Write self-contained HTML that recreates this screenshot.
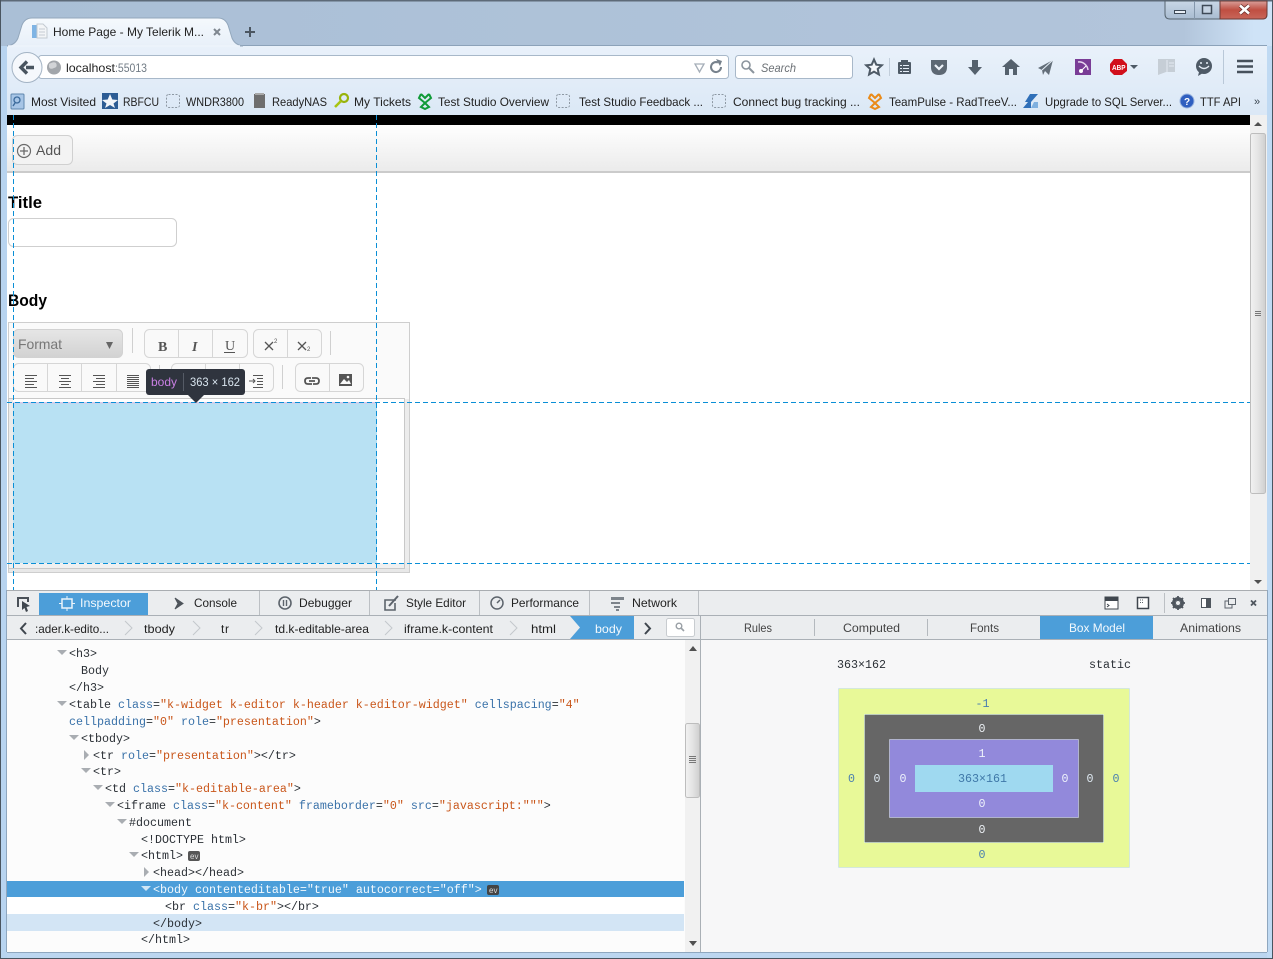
<!DOCTYPE html>
<html><head><meta charset="utf-8"><title>Home Page - My Telerik M...</title>
<style>
html,body{margin:0;padding:0;width:1273px;height:959px;overflow:hidden;background:#bcd6f0}
svg{display:block}
text{font-family:"Liberation Sans",sans-serif;font-size:12px;fill:#222}
.m text,text.m,.m{font-family:"Liberation Mono",monospace;font-size:11.67px;fill:#2b3036}
.n{fill:#3a72a9}.v{fill:#c9561a}
.w{fill:#fff}
.b{fill:#4a7fb0}
</style></head><body>
<svg width="1273" height="959" viewBox="0 0 1273 959" xmlns="http://www.w3.org/2000/svg" xml:space="preserve">
<defs>
<linearGradient id="title" x1="0" x2="1" y1="0" y2="0"><stop offset="0" stop-color="#aabfd6"/><stop offset=".93" stop-color="#b2c5db"/><stop offset=".985" stop-color="#cfe3f7"/></linearGradient>
<linearGradient id="nav" x1="0" x2="0" y1="0" y2="1"><stop offset="0" stop-color="#e9f1fa"/><stop offset="1" stop-color="#dbe8f6"/></linearGradient>
<linearGradient id="tab" x1="0" x2="0" y1="0" y2="1"><stop offset="0" stop-color="#f5f9fd"/><stop offset="1" stop-color="#e8f0f9"/></linearGradient>
<linearGradient id="tb" x1="0" x2="0" y1="0" y2="1"><stop offset="0" stop-color="#fff"/><stop offset="1" stop-color="#ebebeb"/></linearGradient>
<linearGradient id="fmt" x1="0" x2="0" y1="0" y2="1"><stop offset="0" stop-color="#e6e6e6"/><stop offset="1" stop-color="#d2d2d2"/></linearGradient>
<linearGradient id="thumb" x1="0" x2="1" y1="0" y2="0"><stop offset="0" stop-color="#f2f2f2"/><stop offset=".5" stop-color="#e4e4e4"/><stop offset="1" stop-color="#cfcfcf"/></linearGradient>
<linearGradient id="close" x1="0" x2="0" y1="0" y2="1"><stop offset="0" stop-color="#d9a09a"/><stop offset=".5" stop-color="#bf4f42"/><stop offset="1" stop-color="#c8665a"/></linearGradient>
<linearGradient id="ctl" x1="0" x2="0" y1="0" y2="1"><stop offset="0" stop-color="#c8d7e6"/><stop offset="1" stop-color="#a9bcd1"/></linearGradient>
</defs>

<!-- window frame -->
<rect width="1273" height="959" fill="#bcd6f0"/>
<rect x="0" y="0" width="1273" height="46" fill="url(#title)"/>
<rect x="0" y="0" width="1273" height="1.5" fill="#5d6a78"/>
<rect x="0" y="0" width="1" height="959" fill="#4a5560"/>
<rect x="1272" y="0" width="1" height="959" fill="#4a5560"/>
<rect x="0" y="958" width="1273" height="1" fill="#4a5560"/>
<rect x="1" y="46" width="6" height="912" fill="#b8d4f0"/>
<rect x="1267" y="46" width="5" height="912" fill="#c0daf3"/>

<!-- window controls -->
<path d="M1165 1V14Q1165 19 1170 19H1263Q1267 19 1267 14V1Z" fill="url(#ctl)" stroke="#56646f"/>
<path d="M1220 1H1267V14Q1267 19 1263 19H1220Z" fill="url(#close)" stroke="#6b3a36"/>
<line x1="1194.500" y1="1" x2="1194.500" y2="19" stroke="#8497ab"/>
<rect x="1174.500" y="10.500" width="11" height="3" fill="#e8eef5" stroke="#3e4a57"/>
<rect x="1202.500" y="5.500" width="9" height="8" fill="#c5d3e2" stroke="#3e4a57" stroke-width="1.500"/>
<path d="M1240 5.500L1249 13.500M1249 5.500L1240 13.500" stroke="#5f2a26" stroke-width="4"/>
<path d="M1240 5.500L1249 13.500M1249 5.500L1240 13.500" stroke="#fff" stroke-width="2.600"/>

<!-- nav + bookmarks -->
<rect x="7" y="46" width="1260" height="69" fill="url(#nav)"/>
<line x1="7" y1="45.500" x2="1267" y2="45.500" stroke="#8ca2b9"/>
<path d="M7 46Q15 45 18 38L22 25Q25 18 32 18H218Q225 18 228 25L232 38Q235 45 243 46Z" fill="url(#tab)" stroke="#93a7bc"/>
<line x1="8" y1="46" x2="240" y2="46" stroke="#eef4fb" stroke-width="1.500"/>
<path d="M32 25H37V38H32Z" fill="#7fb4e4"/><path d="M37 24H43L47 28V38H37Z" fill="#f3f5f7" stroke="#c3cad1"/>
<path d="M39 29H45M39 32H45M39 35H45" stroke="#c6ccd3"/>
<text x="53" y="36" textLength="151" lengthAdjust="spacingAndGlyphs">Home Page - My Telerik M...</text>
<path d="M214 29L220 35M220 29L214 35" stroke="#7f8790" stroke-width="2"/>
<path d="M250 27V37M245 32H255" stroke="#4b5661" stroke-width="2"/>

<rect x="38.500" y="55.500" width="690" height="23" rx="3" fill="#fff" stroke="#a8b8c9"/>
<circle cx="27" cy="67.500" r="15" fill="#f5f8fc" stroke="#a3b3c4"/>
<path d="M34 67.500H26M27 61.500L21 67.500L27 73.500" fill="none" stroke="#4a5560" stroke-width="3.400"/>
<circle cx="54" cy="67.500" r="7" fill="#a2a6ab"/><path d="M49 64Q54 61 56 63Q58 67 54 68Q50 70 49 67Z" fill="#d2d4d7"/>
<text x="66" y="72" textLength="49" lengthAdjust="spacingAndGlyphs">localhost</text>
<text x="115" y="72" textLength="32" lengthAdjust="spacingAndGlyphs" style="fill:#717b85">:55013</text>
<path d="M695 64H704L699.500 72Z" fill="none" stroke="#a5aeb8" stroke-width="1.300"/>
<path d="M721 67A5 5 0 1 1 718 62.500" fill="none" stroke="#76818c" stroke-width="2"/><path d="M716 59L722 61L720 66Z" fill="#76818c"/>
<rect x="735.500" y="55.500" width="117" height="23" rx="3" fill="#fff" stroke="#a8b8c9"/>
<circle cx="746" cy="65" r="4" fill="none" stroke="#8b949d" stroke-width="1.600"/><line x1="749" y1="68" x2="754" y2="73" stroke="#8b949d" stroke-width="2"/>
<text x="761" y="72" textLength="35" lengthAdjust="spacingAndGlyphs" style="font-style:italic;fill:#6c7176">Search</text>

<!-- toolbar icons -->
<path d="M874 59.500L876.300 64.700L881.800 65.300L877.700 69L878.900 74.500L874 71.600L869.100 74.500L870.300 69L866.200 65.300L871.700 64.700Z" fill="#f4f7fb" stroke="#4e5a66" stroke-width="2"/>
<line x1="889.500" y1="58" x2="889.500" y2="76" stroke="#c2cedb"/>
<rect x="898" y="62" width="13" height="12" rx="1" fill="#4e5a66"/><rect x="901" y="60" width="7" height="3" fill="#4e5a66"/>
<path d="M900 65.500H902M903 65.500H909M900 68.500H902M903 68.500H909M900 71.500H902M903 71.500H909" stroke="#e6eef7"/>
<path d="M931 60H947V67Q947 75 939 75Q931 75 931 67Z" fill="#5d6873"/><path d="M935 65L939 69L943 65" fill="none" stroke="#eef3f9" stroke-width="2.200"/>
<path d="M972 60H978V67H982L975 75L968 67H972Z" fill="#55616d"/>
<path d="M1011 59L1020 67H1017V75H1013V69H1009V75H1005V67H1002Z" fill="#55616d"/>
<path d="M1053 60L1049 75L1045 71L1043 75L1042 70L1038 68Z" fill="#636e79"/><path d="M1053 60L1042 70" stroke="#e6eef7"/>
<rect x="1075" y="59" width="16" height="16" fill="#7a3d96"/>
<path d="M1078 62A9 9 0 0 1 1088 70" fill="none" stroke="#e8d7ef" stroke-width="1.500"/><circle cx="1081" cy="71" r="2" fill="#fff"/><path d="M1082 70L1086 66" stroke="#fff"/>
<path d="M1114 59H1122L1127 64V71L1122 75H1114L1110 71V64Z" fill="#d10f1b"/>
<text x="1112" y="70" textLength="13.500" lengthAdjust="spacingAndGlyphs" style="font-size:7.500px;font-weight:bold;fill:#fff">ABP</text>
<path d="M1130 65H1138L1134 69Z" fill="#4e5a66"/>
<path d="M1158 59H1175V72H1166L1158 75Z" fill="#c6ced6"/><path d="M1167 60V72M1169 63H1174M1169 66H1174" stroke="#e4ebf2"/>
<circle cx="1204" cy="66" r="8" fill="#4e5a66"/><path d="M1199 72L1198 76L1203 73Z" fill="#4e5a66"/><path d="M1199 66Q1204 71 1209 66" fill="none" stroke="#e6eef7" stroke-width="1.300"/><circle cx="1201" cy="63" r="1" fill="#e6eef7"/><circle cx="1207" cy="63" r="1" fill="#e6eef7"/>
<line x1="1223.500" y1="50" x2="1223.500" y2="84" stroke="#b9c8d8"/>
<path d="M1237 61H1253M1237 66.500H1253M1237 72H1253" stroke="#46515c" stroke-width="2.600"/>

<!-- bookmarks -->
<rect x="11" y="94" width="13" height="15" rx="1" fill="#a7c5e6" stroke="#5f86ad"/><circle cx="17" cy="100" r="3" fill="none" stroke="#3b6a9b" stroke-width="1.300"/><line x1="15" y1="103" x2="13" y2="106" stroke="#3b6a9b" stroke-width="1.400"/>
<text x="31" y="106" textLength="65" lengthAdjust="spacingAndGlyphs">Most Visited</text>
<rect x="102" y="93" width="16" height="16" fill="#2c5c94"/><path d="M110 94L112.300 99.500L118 100L113.500 103.500L115 108L110 105L105 108L106.500 103.500L102 100L107.700 99.500Z" fill="#f2f5f9"/>
<text x="123" y="106" textLength="36" lengthAdjust="spacingAndGlyphs">RBFCU</text>
<rect x="166.500" y="94.500" width="13" height="13" rx="2" fill="none" stroke="#8d98a3" stroke-dasharray="2 1.500"/>
<text x="186" y="106" textLength="58" lengthAdjust="spacingAndGlyphs">WNDR3800</text>
<rect x="254" y="94" width="11" height="14" fill="#6e6e6e"/><rect x="255" y="93" width="9" height="2" fill="#a9a9a9"/>
<text x="272" y="106" textLength="55" lengthAdjust="spacingAndGlyphs">ReadyNAS</text>
<circle cx="344" cy="98" r="4" fill="none" stroke="#98b30b" stroke-width="2.200"/><path d="M341 101L335 107" stroke="#a8c412" stroke-width="2.600"/>
<text x="354" y="106" textLength="57" lengthAdjust="spacingAndGlyphs">My Tickets</text>
<path d="M421 94L425 98L429 94M421 94L419 98L425 103L431 98L429 94M425 103L421 107L425 109L429 107Z" fill="none" stroke="#109a37" stroke-width="2"/>
<text x="438" y="106" textLength="111" lengthAdjust="spacingAndGlyphs">Test Studio Overview</text>
<rect x="556.500" y="94.500" width="13" height="13" rx="2" fill="none" stroke="#8d98a3" stroke-dasharray="2 1.500"/>
<text x="579" y="106" textLength="124" lengthAdjust="spacingAndGlyphs">Test Studio Feedback ...</text>
<rect x="712.500" y="94.500" width="13" height="13" rx="2" fill="none" stroke="#8d98a3" stroke-dasharray="2 1.500"/>
<text x="733" y="106" textLength="127" lengthAdjust="spacingAndGlyphs">Connect bug tracking ...</text>
<path d="M871 94L875 98L879 94M871 94L869 98L875 103L881 98L879 94M875 103L871 107L875 109L879 107Z" fill="none" stroke="#ea8a18" stroke-width="2"/>
<text x="889" y="106" textLength="128" lengthAdjust="spacingAndGlyphs">TeamPulse - RadTreeV...</text>
<path d="M1030 94H1038L1031 102H1025Z" fill="#2f6fb8"/><path d="M1023 108L1028 102H1031V108Z" fill="#2f6fb8"/><path d="M1034 102H1038V108H1031Z" fill="#7fb0df"/>
<text x="1045" y="106" textLength="127" lengthAdjust="spacingAndGlyphs">Upgrade to SQL Server...</text>
<circle cx="1187" cy="101" r="7" fill="#2f5fc0" stroke="#9bb5df"/><text x="1184" y="105" style="font-size:10px;font-weight:bold;fill:#fff">?</text>
<text x="1200" y="106" textLength="41" lengthAdjust="spacingAndGlyphs">TTF API</text>
<text x="1254" y="105" style="font-size:11px;fill:#3b4650">»</text>

<!-- page -->
<rect x="7" y="115" width="1260" height="475" fill="#fff"/>
<rect x="7" y="115" width="1243" height="10" fill="#000"/>
<rect x="1250" y="115" width="17" height="475" fill="#f0f0f0"/>
<rect x="1250.500" y="133.500" width="15" height="360" rx="2" fill="url(#thumb)" stroke="#bdbdbd"/>
<path d="M1255 311.500H1261M1255 313.500H1261M1255 315.500H1261" stroke="#777"/>
<path d="M1254 126L1258 122L1262 126Z" fill="#505050"/><path d="M1254 580L1258 584L1262 580Z" fill="#505050"/>

<rect x="7" y="125" width="1243" height="46" fill="url(#tb)"/>
<rect x="7" y="171" width="1243" height="2" fill="#cbcbcb"/>
<rect x="12.500" y="135.500" width="60" height="29" rx="5" fill="#f3f3f3" stroke="#d0d0d0"/>
<circle cx="24" cy="151" r="6.500" fill="none" stroke="#6a6a6a" stroke-width="1.200"/><path d="M24 147V155M20 151H28" stroke="#6a6a6a" stroke-width="1.300"/>
<text x="36" y="155" textLength="25" style="font-size:14px;fill:#555">Add</text>

<text x="8" y="208" textLength="34" lengthAdjust="spacingAndGlyphs" style="font-size:16.500px;font-weight:bold;fill:#000">Title</text>
<rect x="8.500" y="218.500" width="168" height="28" rx="5" fill="#fff" stroke="#cfcfcf"/>
<text x="8" y="306" textLength="39" lengthAdjust="spacingAndGlyphs" style="font-size:16.500px;font-weight:bold;fill:#000">Body</text>

<!-- editor -->
<rect x="8.500" y="322.500" width="401" height="250" fill="#fafafa" stroke="#cecece"/>
<rect x="405" y="399" width="4" height="173" fill="#ececec"/>
<rect x="9" y="568" width="400" height="4" fill="#e8e8e8"/>
<rect x="13.500" y="329.500" width="109" height="28" rx="5" fill="url(#fmt)" stroke="#d2d2d2"/>
<text x="18" y="349" textLength="44" style="font-size:14px;fill:#777">Format</text>
<path d="M106 342H113L109.500 349Z" fill="#666"/>
<line x1="132.500" y1="328" x2="132.500" y2="353" stroke="#d0d0d0"/>
<rect x="144.500" y="329.500" width="103" height="28" rx="5" fill="#f9f9f9" stroke="#d6d6d6"/>
<path d="M178.500 330V357M212.500 330V357" stroke="#d6d6d6"/>
<text x="158" y="351" style="font-family:'Liberation Serif',serif;font-size:14px;font-weight:bold;fill:#555">B</text>
<text x="192" y="351" style="font-family:'Liberation Serif',serif;font-size:14px;font-style:italic;font-weight:bold;fill:#555">I</text>
<text x="225" y="350" style="font-family:'Liberation Serif',serif;font-size:14px;fill:#555">U</text><line x1="224" y1="352.500" x2="235" y2="352.500" stroke="#555"/>
<rect x="253.500" y="329.500" width="68" height="28" rx="5" fill="#f9f9f9" stroke="#d6d6d6"/>
<line x1="287.500" y1="330" x2="287.500" y2="357" stroke="#d6d6d6"/>
<path d="M265 342L273 350M273 342L265 350M298 342L306 350M306 342L298 350" stroke="#555" stroke-width="1.300"/>
<text x="274" y="343" style="font-size:6px;fill:#555">2</text><text x="307" y="351" style="font-size:6px;fill:#555">2</text>
<line x1="330.500" y1="331" x2="330.500" y2="355" stroke="#d0d0d0"/>
<rect x="13.500" y="363.500" width="137" height="28" rx="5" fill="#f9f9f9" stroke="#d6d6d6"/>
<path d="M47.500 364V391M81.500 364V391M116.500 364V391" stroke="#d6d6d6"/>
<path d="M25 375.500H37M25 378.500H34M25 381.500H37M25 384.500H34M25 387.500H37" stroke="#555"/>
<path d="M59 375.500H71M61 378.500H69M59 381.500H71M61 384.500H69M59 387.500H71" stroke="#555"/>
<path d="M93 375.500H105M96 378.500H105M93 381.500H105M96 384.500H105M93 387.500H105" stroke="#555"/>
<path d="M127 375.500H139M127 377.500H139M127 379.500H139M127 381.500H139M127 383.500H139M127 385.500H139M127 387.500H139" stroke="#555"/>
<line x1="159.500" y1="365" x2="159.500" y2="389" stroke="#d0d0d0"/>
<rect x="171.500" y="363.500" width="102" height="28" rx="5" fill="#f9f9f9" stroke="#d6d6d6"/>
<path d="M205.500 364V391M239.500 364V391" stroke="#d6d6d6"/>
<path d="M253 375.500H263M257 378.500H263M257 381.500H263M257 384.500H263M253 387.500H263M249 381H255M253 379L255 381L253 383" stroke="#555" fill="none"/>
<line x1="282.500" y1="365" x2="282.500" y2="389" stroke="#d0d0d0"/>
<rect x="295.500" y="363.500" width="68" height="28" rx="5" fill="#f9f9f9" stroke="#d6d6d6"/>
<line x1="329.500" y1="364" x2="329.500" y2="391" stroke="#d6d6d6"/>
<path d="M311 378H308Q305 378 305 381Q305 384 308 384H312M313 384H316Q319 384 319 381Q319 378 316 378H312M309 381H315" fill="none" stroke="#555" stroke-width="1.800"/>
<rect x="339" y="374" width="13" height="12" fill="#555"/><path d="M340 384L344 379L347 382L349 380L351 384Z" fill="#f9f9f9"/><circle cx="348" cy="377" r="1.300" fill="#f9f9f9"/>

<rect x="8.500" y="398.500" width="396" height="170" fill="#fff" stroke="#c8c8c8"/>
<rect x="9" y="399" width="4" height="169" fill="#ebebeb"/>
<rect x="9" y="563" width="395" height="5" fill="#f0f0f0"/>
<rect x="13" y="403" width="364" height="160" fill="#b8e1f3"/>
<rect x="13" y="402" width="364" height="1.500" fill="#d8c8e8"/>

<!-- guides -->
<g stroke="#0a8fd6" stroke-dasharray="5 3" fill="none">
<line x1="13.500" y1="115" x2="13.500" y2="590"/>
<line x1="376.500" y1="115" x2="376.500" y2="590"/>
<line x1="7" y1="402.500" x2="1250" y2="402.500"/>
<line x1="7" y1="563.500" x2="1250" y2="563.500"/>
</g>

<!-- tooltip -->
<rect x="146" y="369" width="99" height="26" rx="3" fill="#2f343e"/>
<path d="M188 395H204L196 403Z" fill="#2f343e"/>
<line x1="183.500" y1="373" x2="183.500" y2="391" stroke="#555b66"/>
<text x="151" y="386" textLength="26" style="fill:#c97fe3;font-size:12px">body</text>
<text x="190" y="386" textLength="50" lengthAdjust="spacingAndGlyphs" style="fill:#d8e4ee;font-size:12px">363 × 162</text>

<!-- devtools toolbar -->
<rect x="7" y="590" width="1260" height="26" fill="#ebedef"/>
<line x1="7" y1="590.500" x2="1267" y2="590.500" stroke="#a9adb1"/>
<line x1="7" y1="615.500" x2="1267" y2="615.500" stroke="#aab0b6"/>
<path d="M18 607V598H28V602" fill="none" stroke="#4a5058" stroke-width="2"/><path d="M22 601L30 606L26.500 607L28 611L26 612L24.500 608L22 610Z" fill="#3f464e"/>
<rect x="39" y="593" width="109" height="22" fill="#4c9ed9"/>
<rect x="62" y="599" width="10" height="9" fill="none" stroke="#eaf4fb" stroke-width="1.500"/><path d="M67 596V599M67 608V611M59 603.500H62M72 603.500H75" stroke="#eaf4fb"/>
<text x="80" y="607" textLength="51" lengthAdjust="spacingAndGlyphs" style="fill:#f3f9fd">Inspector</text>
<path d="M175 598L183 603.500L175 609L178 603.500Z" fill="#4e545b" stroke="#4e545b"/>
<text x="194" y="607" textLength="43" lengthAdjust="spacingAndGlyphs">Console</text>
<circle cx="285" cy="603" r="6" fill="none" stroke="#5d646c" stroke-width="1.600"/><path d="M283.500 600V606M286.500 600V606" stroke="#5d646c" stroke-width="1.400"/>
<text x="299" y="607" textLength="53" lengthAdjust="spacingAndGlyphs">Debugger</text>
<path d="M396 600H385V610H395V603" fill="none" stroke="#5d646c" stroke-width="1.600"/><path d="M389 606L398 596" stroke="#5d646c" stroke-width="2"/>
<text x="406" y="607" textLength="60" lengthAdjust="spacingAndGlyphs">Style Editor</text>
<circle cx="497" cy="603" r="6" fill="none" stroke="#5d646c" stroke-width="1.500"/><path d="M497 603L500 600" stroke="#5d646c" stroke-width="1.500"/>
<text x="511" y="607" textLength="68" lengthAdjust="spacingAndGlyphs">Performance</text>
<path d="M611 597H624V600H611ZM611 602H620V604H611ZM614 606H620V608H614ZM616 609H619V611H616Z" fill="#7d848b"/>
<text x="632" y="607" textLength="45" lengthAdjust="spacingAndGlyphs">Network</text>
<path d="M259.500 591V615M369.500 591V615M479.500 591V615M589.500 591V615M698.500 591V615" stroke="#bcc0c4"/>
<rect x="1105" y="597" width="13" height="12" fill="#fff" stroke="#3f464e"/><rect x="1105" y="597" width="13" height="4" fill="#3f464e"/><path d="M1107 604L1109 605.500L1107 607" fill="none" stroke="#3f464e"/>
<rect x="1137.500" y="597.500" width="11" height="11" fill="#fff" stroke="#3f464e" stroke-width="1.500"/><path d="M1140 600H1143M1140 602.500H1143" stroke="#5d646c" stroke-dasharray="1 1"/>
<line x1="1164.500" y1="593" x2="1164.500" y2="613" stroke="#bcc0c4"/>
<circle cx="1178" cy="603" r="4.500" fill="none" stroke="#4f565e" stroke-width="3"/><path d="M1178 596V610M1171 603H1185M1173 598L1183 608M1183 598L1173 608" stroke="#4f565e" stroke-width="1.800"/><circle cx="1178" cy="603" r="2" fill="#ebedef"/>
<rect x="1201.500" y="598.500" width="9" height="9" fill="#fff" stroke="#4f565e"/><rect x="1206" y="598" width="5" height="10" fill="#4f565e"/>
<rect x="1228.500" y="598.500" width="7" height="6" fill="none" stroke="#5d646c"/><path d="M1228 601H1225V608H1232V605" fill="none" stroke="#5d646c"/>
<path d="M1251 600.500L1256 605.500M1256 600.500L1251 605.500" stroke="#4f565e" stroke-width="1.800"/>

<!-- breadcrumbs -->
<rect x="7" y="616" width="1260" height="23" fill="#ebedef"/>
<line x1="7" y1="639.500" x2="1267" y2="639.500" stroke="#aab0b6"/>
<path d="M26 623L21 628.500L26 634" fill="none" stroke="#3f464e" stroke-width="2"/>
<text x="35" y="633" textLength="74" lengthAdjust="spacingAndGlyphs">:ader.k-edito...</text>
<text x="144" y="633" textLength="31" lengthAdjust="spacingAndGlyphs">tbody</text>
<text x="221" y="633" textLength="8">tr</text>
<text x="275" y="633" textLength="94" lengthAdjust="spacingAndGlyphs">td.k-editable-area</text>
<text x="404" y="633" textLength="89" lengthAdjust="spacingAndGlyphs">iframe.k-content</text>
<text x="531" y="633" textLength="25" lengthAdjust="spacingAndGlyphs">html</text>
<path d="M125 621L132 628L125 635M193 621L200 628L193 635M255 621L262 628L255 635M385 621L392 628L385 635M510 621L517 628L510 635" fill="none" stroke="#c4c8cc"/>
<path d="M570 616H634V639H570L580 627.500Z" fill="#4c9ed9"/>
<text x="595" y="633" textLength="27" lengthAdjust="spacingAndGlyphs" style="fill:#f3f9fd">body</text>
<path d="M645 623L650 628.500L645 634" fill="none" stroke="#3f464e" stroke-width="2"/>
<rect x="666.500" y="618.500" width="28" height="18" rx="2" fill="#fff" stroke="#c8ccd0"/>
<circle cx="679" cy="626" r="2.800" fill="none" stroke="#9aa0a6" stroke-width="1.400"/><path d="M681 628L684 631" stroke="#9aa0a6" stroke-width="1.600"/>
<line x1="700.500" y1="616" x2="700.500" y2="952" stroke="#aab0b6"/>

<rect x="1040" y="616" width="113" height="23" fill="#4c9ed9"/>
<path d="M814.500 619V636M927.500 619V636" stroke="#b4b9be"/>
<text x="744" y="632" textLength="28" lengthAdjust="spacingAndGlyphs" style="fill:#444">Rules</text>
<text x="843" y="632" textLength="57" lengthAdjust="spacingAndGlyphs" style="fill:#444">Computed</text>
<text x="970" y="632" textLength="29" lengthAdjust="spacingAndGlyphs" style="fill:#444">Fonts</text>
<text x="1069" y="632" textLength="56" lengthAdjust="spacingAndGlyphs" style="fill:#f3f9fd">Box Model</text>
<text x="1180" y="632" textLength="61" lengthAdjust="spacingAndGlyphs" style="fill:#444">Animations</text>

<!-- tree -->
<rect x="7" y="640" width="693" height="312" fill="#fcfcfc"/>
<rect x="7" y="881" width="677" height="16" fill="#4c9ed9"/>
<rect x="7" y="897" width="677" height="17" fill="#fff"/>
<rect x="7" y="914" width="677" height="17" fill="#d3e5f5"/>
<rect x="685" y="640" width="15" height="312" fill="#f1f1f1"/>
<rect x="685.500" y="723.500" width="14" height="74" rx="2" fill="url(#thumb)" stroke="#bdbdbd"/>
<path d="M689 756.500H696M689 758.500H696M689 760.500H696M689 762.500H696" stroke="#777"/>
<path d="M689 651L693 646L697 651Z" fill="#505050"/><path d="M689 941L693 946L697 941Z" fill="#505050"/>

<g fill="#a9adb2">
<path d="M57 650H67L62 655Z"/><path d="M57 701H67L62 706Z"/><path d="M69 735H79L74 740Z"/>
<path d="M84 750V760L89 755Z"/><path d="M81 768H91L86 773Z"/><path d="M93 785H103L98 790Z"/>
<path d="M105 802H115L110 807Z"/><path d="M117 819H127L122 824Z"/><path d="M129 852H139L134 857Z"/>
<path d="M144 867V877L149 872Z"/>
</g>
<path d="M141 886H151L146 891Z" fill="#cfe6f6"/>

<g class="m">
<text class="m" x="69" y="657">&lt;h3&gt;</text>
<text class="m" x="81" y="674">Body</text>
<text class="m" x="69" y="691">&lt;/h3&gt;</text>
<text class="m" x="69" y="708">&lt;table <tspan class="n">class</tspan>=<tspan class="v">"k-widget k-editor k-header k-editor-widget"</tspan> <tspan class="n">cellspacing</tspan>=<tspan class="v">"4"</tspan></text>
<text class="m" x="69" y="725"><tspan class="n">cellpadding</tspan>=<tspan class="v">"0"</tspan> <tspan class="n">role</tspan>=<tspan class="v">"presentation"</tspan>&gt;</text>
<text class="m" x="81" y="742">&lt;tbody&gt;</text>
<text class="m" x="93" y="759">&lt;tr <tspan class="n">role</tspan>=<tspan class="v">"presentation"</tspan>&gt;&lt;/tr&gt;</text>
<text class="m" x="93" y="775">&lt;tr&gt;</text>
<text class="m" x="105" y="792">&lt;td <tspan class="n">class</tspan>=<tspan class="v">"k-editable-area"</tspan>&gt;</text>
<text class="m" x="117" y="809">&lt;iframe <tspan class="n">class</tspan>=<tspan class="v">"k-content"</tspan> <tspan class="n">frameborder</tspan>=<tspan class="v">"0"</tspan> <tspan class="n">src</tspan>=<tspan class="v">"javascript:"""</tspan>&gt;</text>
<text class="m" x="129" y="826">#document</text>
<text class="m" x="141" y="843">&lt;!DOCTYPE html&gt;</text>
<text class="m" x="141" y="859">&lt;html&gt;</text>
<text class="m" x="153" y="876">&lt;head&gt;&lt;/head&gt;</text>
<text class="m" x="153" y="893" style="fill:#f3f9fd">&lt;body contenteditable="true" autocorrect="off"&gt;</text>
<text class="m" x="165" y="910">&lt;br <tspan class="n">class</tspan>=<tspan class="v">"k-br"</tspan>&gt;&lt;/br&gt;</text>
<text class="m" x="153" y="927">&lt;/body&gt;</text>
<text class="m" x="141" y="943">&lt;/html&gt;</text>
</g>
<rect x="188" y="851" width="12" height="10" rx="2" fill="#555"/><text x="190" y="859" style="font-size:8px;fill:#ddd">ev</text>
<rect x="487" y="885" width="12" height="10" rx="2" fill="#444"/><text x="489" y="893" style="font-size:8px;fill:#ddd">ev</text>

<!-- box model -->
<rect x="701" y="640" width="566" height="312" fill="#f7f7f8"/>
<text class="m" x="837" y="668">363×162</text>
<text class="m" x="1089" y="668">static</text>
<rect x="838.500" y="688.500" width="291" height="179" fill="#e8f998" stroke="#b8d8f0" stroke-dasharray="1 1"/>
<rect x="864.500" y="714.500" width="239" height="128" fill="#666" stroke="#cfe6f8" stroke-dasharray="1 1"/>
<rect x="889.500" y="739.500" width="189" height="78" fill="#9289db" stroke="#e6f0fa" stroke-dasharray="1 1"/>
<rect x="915" y="765" width="138" height="27" fill="#9fd9f0"/>
<g text-anchor="middle">
<text class="m b" x="982.500" y="707" style="fill:#4a7fb0">-1</text>
<text class="m" x="982" y="732" style="fill:#eef2f6">0</text>
<text class="m" x="982" y="757" style="fill:#eef2fb">1</text>
<text class="m" x="982.500" y="782" style="fill:#3f78a8">363×161</text>
<text class="m" x="982" y="807" style="fill:#eef2fb">0</text>
<text class="m" x="982" y="833" style="fill:#eef2f6">0</text>
<text class="m" x="982" y="858" style="fill:#4a7fb0">0</text>
<text class="m" x="851.500" y="782" style="fill:#4a7fb0">0</text>
<text class="m" x="877" y="782" style="fill:#dfe9f2">0</text>
<text class="m" x="903" y="782" style="fill:#eef2fb">0</text>
<text class="m" x="1065" y="782" style="fill:#eef2fb">0</text>
<text class="m" x="1090" y="782" style="fill:#dfe9f2">0</text>
<text class="m" x="1116" y="782" style="fill:#4a7fb0">0</text>
</g>
<line x1="7" y1="952.500" x2="1267" y2="952.500" stroke="#8fa7bf"/>
<line x1="6.500" y1="590" x2="6.500" y2="952" stroke="#8fa7bf"/>
<line x1="1267.500" y1="590" x2="1267.500" y2="952" stroke="#8fa7bf"/>
</svg>
</body></html>
